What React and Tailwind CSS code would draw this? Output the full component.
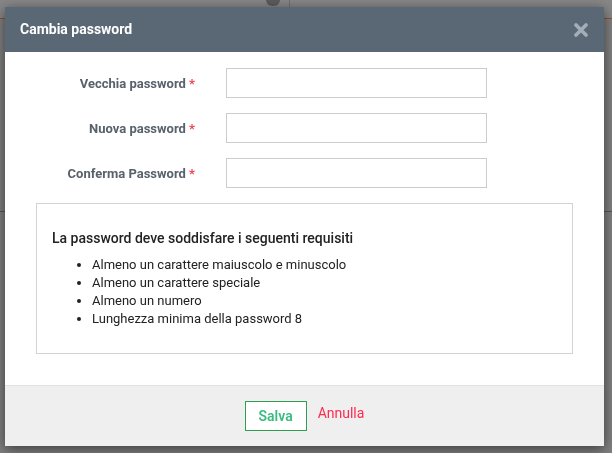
import React from 'react';

const fields = ['Vecchia password', 'Nuova password', 'Conferma Password'];

const rules = [
  'Almeno un carattere maiuscolo e minuscolo',
  'Almeno un carattere speciale',
  'Almeno un numero',
  'Lunghezza minima della password 8',
];

const App = () => {
  return (
    <div className="relative h-[453px] w-[612px] overflow-hidden bg-[#808080] font-['Roboto',sans-serif]">
      {/* Page behind the overlay */}
      <div className="flex h-[19px] items-start border-b border-[#9c4a3c] bg-[#878787]">
        <div className="ml-[266px] h-[6px] w-[14px] rounded-b-full bg-[#5c5c5c]" />
        <div className="ml-[9px] h-[19px] w-px bg-[#6f6f6f]" />
      </div>
      <div className="mt-[192px] h-px w-full bg-[#555]" />

      {/* Modal */}
      <div className="fixed inset-0 flex items-start justify-start pl-[5px] pt-[7px]">
        <div className="w-[599px] bg-white shadow-[0_3px_12px_rgba(0,0,0,0.55)]">
          <div className="flex h-[45px] items-center justify-between bg-[#5a6876] pl-[15px] pr-[16px]">
            <h4 className="text-[14px] font-bold text-white">Cambia password</h4>
            <svg width="14" height="14" viewBox="0 0 14 14" className="mt-[1px] ml-[1px]">
              <path d="M2 2 L12 12 M12 2 L2 12" stroke="#a4aeb8" strokeWidth="3.6" strokeLinecap="round" />
            </svg>
          </div>

          <div className="px-[31px] pb-[31px] pt-[16px]">
            <div className="flex flex-col gap-[15px]">
              {fields.map((label) => (
                <div key={label} className="flex items-center">
                  <label className="mt-[1px] w-[160px] pr-[1px] text-right text-[13px] font-bold text-[#58616c]">
                    {label} <span className="text-[#f0404f]">*</span>
                  </label>
                  <input
                    type="password"
                    className="ml-[30px] h-[30px] w-[261px] border border-[#cccccc] bg-white outline-none"
                  />
                </div>
              ))}
            </div>

            <div className="mt-[15px] h-[151px] border border-[#d3d3d3] px-[15px] pt-[25px]">
              <h5 className="text-[14px] font-medium leading-[18px] text-[#222]">
                La password deve soddisfare i seguenti requisiti
              </h5>
              <ul className="mt-[9px] list-disc pl-[40px] text-[13px] leading-[18px] text-[#222]">
                {rules.map((rule) => (
                  <li key={rule}>{rule}</li>
                ))}
              </ul>
            </div>
          </div>

          <div className="flex h-[61px] items-start justify-center gap-[11px] border-t border-[#e2e2e2] bg-[#efefef] pt-[15px]">
            <button className="h-[30px] w-[62px] border border-[#2f9e51] bg-white text-[14px] font-semibold text-[#3bbb7f]">
              Salva
            </button>
            <button className="mt-[2px] text-[14px] text-[#ff2a4f]">Annulla</button>
          </div>
        </div>
      </div>
    </div>
  );
};

export default App;
